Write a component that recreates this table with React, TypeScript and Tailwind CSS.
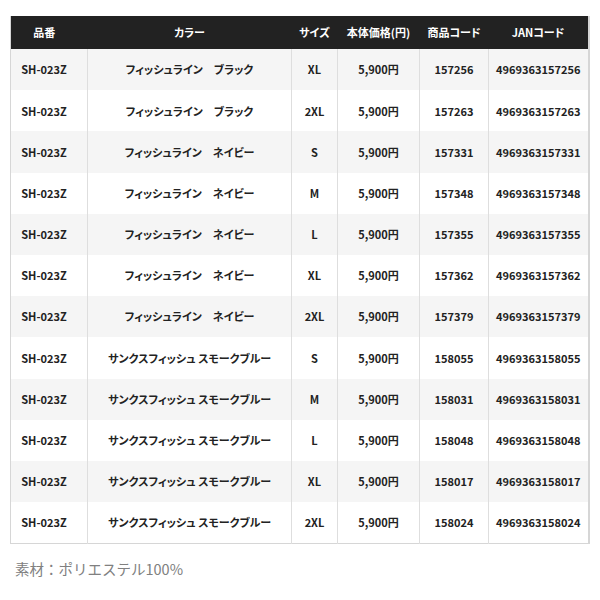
const rows = [
  ["SH-023Z", "フィッシュライン　ブラック", "XL", "5,900円", "157256", "4969363157256"],
  ["SH-023Z", "フィッシュライン　ブラック", "2XL", "5,900円", "157263", "4969363157263"],
  ["SH-023Z", "フィッシュライン　ネイビー", "S", "5,900円", "157331", "4969363157331"],
  ["SH-023Z", "フィッシュライン　ネイビー", "M", "5,900円", "157348", "4969363157348"],
  ["SH-023Z", "フィッシュライン　ネイビー", "L", "5,900円", "157355", "4969363157355"],
  ["SH-023Z", "フィッシュライン　ネイビー", "XL", "5,900円", "157362", "4969363157362"],
  ["SH-023Z", "フィッシュライン　ネイビー", "2XL", "5,900円", "157379", "4969363157379"],
  ["SH-023Z", "サンクスフィッシュ スモークブルー", "S", "5,900円", "158055", "4969363158055"],
  ["SH-023Z", "サンクスフィッシュ スモークブルー", "M", "5,900円", "158031", "4969363158031"],
  ["SH-023Z", "サンクスフィッシュ スモークブルー", "L", "5,900円", "158048", "4969363158048"],
  ["SH-023Z", "サンクスフィッシュ スモークブルー", "XL", "5,900円", "158017", "4969363158017"],
  ["SH-023Z", "サンクスフィッシュ スモークブルー", "2XL", "5,900円", "158024", "4969363158024"],
];

const headers = ["品番", "カラー", "サイズ", "本体価格(円)", "商品コード", "JANコード"];
const widths = ["w-[77px] pr-[10px]", "w-[204px]", "w-[46px]", "w-[82px]", "w-[69px]", "w-[100px]"];

export default function App() {
  return (
    <div className="min-h-[600px] bg-white font-['Noto_Sans_CJK_JP','Noto_Sans',sans-serif]">
      <div className="pl-[10px] pt-[16px]">
        <table className="w-[578px] table-fixed border-collapse border-b border-r-2 border-l border-[#d6d6d6] text-[11px] font-bold text-[#222] [font-feature-settings:'palt']">
          <thead>
            <tr className="h-[33px] bg-[#222] text-white">
              {headers.map((h, i) => (
                <th key={h} className={`${widths[i]} text-center font-bold`}>{h}</th>
              ))}
            </tr>
          </thead>
          <tbody>
            {rows.map((r, i) => (
              <tr key={i} className={`h-[41.2px] ${i % 2 === 0 ? "bg-[#f5f5f5]" : "bg-white"}`}>
                {r.map((c, j) => (
                  <td
                    key={j}
                    className={`text-center whitespace-nowrap ${j === 0 ? "pr-[10px]" : ""} ${j < 5 ? "border-r border-[#dedede]" : ""}`}
                  >
                    {c}
                  </td>
                ))}
              </tr>
            ))}
          </tbody>
        </table>
      </div>
      <p className="pl-[15px] pt-[14px] text-[14.5px] text-[#808080]">素材：ポリエステル100%</p>
    </div>
  );
}
